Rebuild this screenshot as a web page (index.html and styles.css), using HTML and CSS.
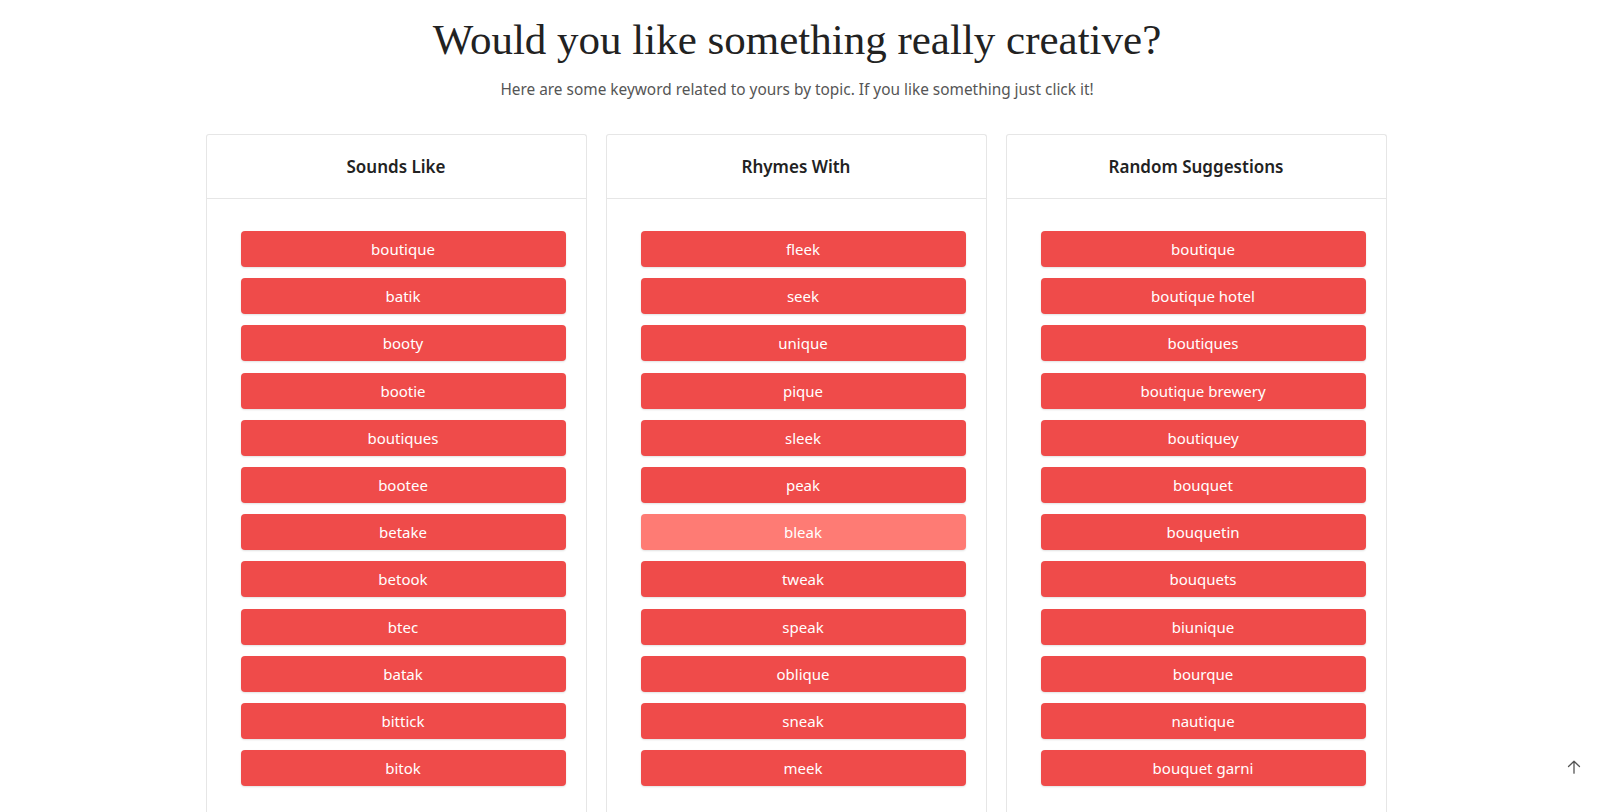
FILE: index.html
```html
<!DOCTYPE html>
<html>
<head>
<meta charset="utf-8">
<link rel="stylesheet" href="styles.css">
</head>
<body>
<div class="page">
  <header class="hero">
    <h1 class="title">Would you like something really creative?</h1>
    <p class="subtitle">Here are some keyword related to yours by topic. If you like something just click it!</p>
  </header>
  <div class="cards">
    <section class="card">
      <h2 class="card-head">Sounds Like</h2>
      <ul class="card-body">
        <li><a class="kw">boutique</a></li>
        <li><a class="kw">batik</a></li>
        <li><a class="kw">booty</a></li>
        <li><a class="kw">bootie</a></li>
        <li><a class="kw">boutiques</a></li>
        <li><a class="kw">bootee</a></li>
        <li><a class="kw">betake</a></li>
        <li><a class="kw">betook</a></li>
        <li><a class="kw">btec</a></li>
        <li><a class="kw">batak</a></li>
        <li><a class="kw">bittick</a></li>
        <li><a class="kw">bitok</a></li>
      </ul>
    </section>
    <section class="card">
      <h2 class="card-head">Rhymes With</h2>
      <ul class="card-body">
        <li><a class="kw">fleek</a></li>
        <li><a class="kw">seek</a></li>
        <li><a class="kw">unique</a></li>
        <li><a class="kw">pique</a></li>
        <li><a class="kw">sleek</a></li>
        <li><a class="kw">peak</a></li>
        <li><a class="kw kw-hover">bleak</a></li>
        <li><a class="kw">tweak</a></li>
        <li><a class="kw">speak</a></li>
        <li><a class="kw">oblique</a></li>
        <li><a class="kw">sneak</a></li>
        <li><a class="kw">meek</a></li>
      </ul>
    </section>
    <section class="card">
      <h2 class="card-head">Random Suggestions</h2>
      <ul class="card-body">
        <li><a class="kw">boutique</a></li>
        <li><a class="kw">boutique hotel</a></li>
        <li><a class="kw">boutiques</a></li>
        <li><a class="kw">boutique brewery</a></li>
        <li><a class="kw">boutiquey</a></li>
        <li><a class="kw">bouquet</a></li>
        <li><a class="kw">bouquetin</a></li>
        <li><a class="kw">bouquets</a></li>
        <li><a class="kw">biunique</a></li>
        <li><a class="kw">bourque</a></li>
        <li><a class="kw">nautique</a></li>
        <li><a class="kw">bouquet garni</a></li>
      </ul>
    </section>
  </div>
</div>
<a class="to-top" aria-label="Back to top">
  <svg width="14" height="14" viewBox="0 0 14 14" fill="none" stroke="#555" stroke-width="1.3" stroke-linecap="round" stroke-linejoin="round">
    <path d="M7 13.2V1.2M1.5 6.5L7 1.2L12.5 6.5"/>
  </svg>
</a>
</body>
</html>
```

FILE: styles.css
```css
html, body {
  margin: 0;
  padding: 0;
  background: #fff;
  overflow: hidden;
}
body {
  font-family: "Noto Sans", "Open Sans", sans-serif;
  color: #222;
  height: 812px;
}
.page {
  width: 1592px;
}
.hero {
  text-align: center;
  padding-top: 14px;
  padding-left: 2px;
}
.title {
  margin: 0;
  font-family: "Liberation Serif", "DejaVu Serif", serif;
  font-weight: 400;
  font-size: 43px;
  line-height: 52px;
  color: #222;
}
.subtitle {
  margin: 13px 0 0;
  font-size: 15.4px;
  line-height: 22px;
  color: #555;
}
.cards {
  display: flex;
  justify-content: center;
  gap: 19px;
  margin-top: 33px;
}
.card {
  width: 381px;
  border: 1px solid #e6e6e6;
  border-bottom: none;
  border-radius: 3px 3px 0 0;
  height: 700px;
  box-sizing: border-box;
}
.card-head {
  margin: 0;
  height: 63px;
  line-height: 63px;
  text-align: center;
  font-size: 17px;
  font-weight: 600;
  color: #222;
  border-bottom: 1px solid #e6e6e6;
}
.card-body {
  list-style: none;
  margin: 0;
  padding: 32px 20px 0 34px;
  display: flex;
  flex-direction: column;
  gap: 11.2px;
}
.kw {
  display: block;
  height: 36px;
  line-height: 36px;
  text-align: center;
  background: #ef4b4a;
  color: #fff;
  font-size: 15px;
  border-radius: 4px;
  box-shadow: 0 1px 2px rgba(0,0,0,0.12);
  cursor: pointer;
}
.kw-hover {
  background: #fe7b74;
}
.to-top {
  position: fixed;
  left: 1567px;
  top: 757px;
  width: 14px;
  height: 14px;
}
```
